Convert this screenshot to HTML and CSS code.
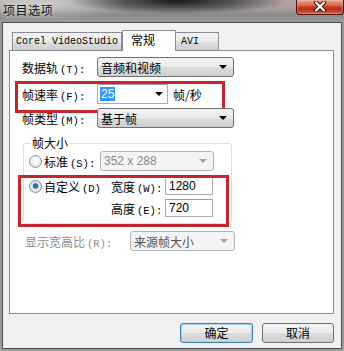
FILE: index.html
```html
<!DOCTYPE html>
<html>
<head>
<meta charset="utf-8">
<link rel="stylesheet" href="styles.css">
</head>
<body>
<div class="window">
  <div class="titlebar">
    <span class="title">项目选项</span>
    <div class="close">
      <svg width="14" height="11" viewBox="0 0 14 11"><path d="M3 1.5 L11 9.5 M11 1.5 L3 9.5" stroke="#3a0d06" stroke-width="4.2" stroke-linecap="round"/><path d="M3 1.5 L11 9.5 M11 1.5 L3 9.5" stroke="#ffffff" stroke-width="2.4" stroke-linecap="round"/></svg>
    </div>
  </div>
  <div class="frame">
    <div class="face">
      <div class="tabs">
        <div class="tab tab-first">Corel VideoStudio</div>
        <div class="tab tab-active">常规</div>
        <div class="tab tab-last">AVI</div>
      </div>
      <div class="panel">
        <div class="row r1">
          <span class="lbl">数据轨<span class="mn">(T):</span></span>
          <div class="combo combo-wide"><span>音频和视频</span><i class="arrow"></i></div>
        </div>
        <div class="row r2 marked">
          <span class="lbl">帧速率<span class="mn">(F):</span></span>
          <div class="edit-combo"><span class="sel">25</span><i class="arrow"></i></div>
          <span class="unit">帧/秒</span>
        </div>
        <div class="row r3">
          <span class="lbl">帧类型<span class="mn">(M):</span></span>
          <div class="combo combo-wide"><span>基于帧</span><i class="arrow"></i></div>
        </div>
        <div class="group">
          <span class="legend">帧大小</span>
          <div class="grow g1">
            <i class="radio"></i>
            <span class="rlbl dim-no">标准<span class="mn">(S):</span></span>
            <div class="combo combo-disabled combo-std"><span class="num">352 x 288</span><i class="arrow arrow-dim"></i></div>
          </div>
          <div class="custom marked2">
            <div class="grow g2">
              <i class="radio radio-on"></i>
              <span class="rlbl rlbl-custom">自定义<span class="mn">(D)</span></span>
              <span class="flbl">宽度<span class="mn">(W):</span></span>
              <div class="edit num">1280</div>
            </div>
            <div class="grow g3">
              <span class="flbl">高度<span class="mn">(E):</span></span>
              <div class="edit num">720</div>
            </div>
          </div>
        </div>
        <div class="row r4">
          <span class="lbl lbl-dim">显示宽高比<span class="mn">(R):</span></span>
          <div class="combo combo-disabled combo-aspect"><span>来源帧大小</span><i class="arrow arrow-dim"></i></div>
        </div>
      </div>
      <div class="buttons">
        <div class="btn btn-default">确定</div>
        <div class="btn">取消</div>
      </div>
    </div>
  </div>
</div>
</body>
</html>
```

FILE: styles.css
```css
* { box-sizing: border-box; }
html, body { margin: 0; padding: 0; }
body {
  width: 344px;
  height: 351px;
  overflow: hidden;
  font-family: "Noto Sans CJK SC", "Noto Sans", sans-serif;
  font-size: 12px;
  color: #000;
}
.window {
  width: 344px;
  height: 351px;
  display: flex;
  flex-direction: column;
  background: #9c9c9c;
}
.titlebar {
  height: 22px;
  display: flex;
  align-items: flex-start;
  background:
    radial-gradient(ellipse 110px 13px at 178px 1px, rgba(18,18,18,0.95), rgba(30,30,30,0.55) 55%, rgba(40,40,40,0)),
    radial-gradient(ellipse 90px 16px at 40px 4px, rgba(215,215,215,0.8), rgba(215,215,215,0)),
    radial-gradient(ellipse 60px 14px at 280px 2px, rgba(190,160,160,0.6), rgba(190,160,160,0)),
    linear-gradient(to bottom, #a8a8a8 0%, #989898 45%, #8a8a8a 65%, #9a9a9a 100%);
}
.title {
  margin: 2px 0 0 3px;
  line-height: 16px;
  font-size: 12px;
  letter-spacing: 0.6px;
  color: #101010;
  text-shadow: 0 0 4px rgba(255,255,255,0.8);
}
.close {
  margin-left: auto;
  width: 48px;
  height: 15px;
  border: 1px solid #4a1208;
  border-top: none;
  border-radius: 0 0 4px 4px;
  background: linear-gradient(to bottom, #e7a08e 0%, #d9705a 35%, #c4371c 52%, #b8301a 70%, #d0654a 100%);
  display: flex;
  align-items: center;
  justify-content: center;
  box-shadow: inset 0 0 0 1px rgba(255,200,180,0.35);
}
.close svg { display: block; margin-top: -1px; }
.frame {
  flex: 1;
  display: flex;
  padding: 0 2px 2px 2px;
}
.face {
  flex: 1;
  border: 1px solid #4e4e4e;
  background: #f0f0f0;
  padding: 7px 7px 0 6px;
  display: flex;
  flex-direction: column;
}
.tabs {
  height: 20px;
  display: flex;
  align-items: flex-end;
  margin-left: 3px;
  position: relative;
  z-index: 1;
}
.tab {
  height: 18px;
  border: 1px solid #898c95;
  border-bottom: none;
  background: linear-gradient(to bottom, #f2f2f2 0%, #ebebeb 50%, #dddddd 51%, #cfcfcf 100%);
  padding: 0 3px;
  line-height: 17px;
  white-space: nowrap;
  overflow: hidden;
  flex: none;
}
.tab-first {
  width: 110px;
  font-family: "Liberation Mono", monospace;
  font-size: 10px;
  letter-spacing: 0;
  padding: 0 0 0 3px;
}
.tab-active {
  width: 54px;
  height: 21px;
  margin-bottom: -1px;
  background: #ffffff;
  padding-left: 8px;
  line-height: 18px;
}
.tab-last {
  width: 43px;
  border-left: none;
  font-family: "Liberation Mono", monospace;
  font-size: 10px;
  padding-left: 5px;
}
.panel {
  width: 325px;
  height: 264px;
  border: 1px solid #898c95;
  background: #ffffff;
  padding: 6px 0 0 12px;
  display: flex;
  flex-direction: column;
}
.row {
  height: 20px;
  display: flex;
  align-items: center;
  position: relative;
}
.r1 { margin-bottom: 7px; }
.r2 { margin-bottom: 4px; }
.lbl {
  width: 75px;
  flex: none;
  white-space: nowrap;
}
.lbl-dim { color: #8e8e8e; width: 105px; margin-left: 3px; }
.mn {
  font-family: "Liberation Mono", monospace;
  font-size: 10.5px;
  margin-left: 2px;
}
.combo {
  height: 20px;
  border: 1px solid #707070;
  border-radius: 3px;
  background: linear-gradient(to bottom, #f2f2f2 0%, #ebebeb 50%, #dddddd 51%, #cfcfcf 100%);
  display: flex;
  align-items: center;
  padding-left: 3px;
  position: relative;
}
.combo-wide { width: 137px; }
.arrow {
  margin-left: auto;
  margin-right: 6px;
  width: 0;
  height: 0;
  border-left: 4px solid transparent;
  border-right: 4px solid transparent;
  border-top: 4px solid #000;
}
.arrow-dim { border-top-color: #a0a0a0; }
.edit-combo {
  width: 71px;
  height: 20px;
  border: 1px solid #abadb3;
  border-top-color: #9aa0a8;
  background: #fff;
  display: flex;
  align-items: center;
  padding-left: 2px;
}
.edit-combo .arrow { margin-right: 4px; }
.sel {
  background: #3399ff;
  color: #fff;
  font-family: "Liberation Sans", Arial, sans-serif;
  line-height: 14px;
  padding: 0 1px;
}
.unit { margin-left: 5px; }
.marked::after {
  content: "";
  position: absolute;
  left: -7px;
  top: -3px;
  width: 204px;
  height: 26px;
  border: 3px solid #c4262c;
  pointer-events: none;
}
.group {
  margin: 15px 0 0 1px;
  width: 209px;
  height: 81px;
  border: 1px solid #d5dfe5;
  border-radius: 3px;
  padding: 0 0 0 5px;
  display: flex;
  flex-direction: column;
}
.legend {
  align-self: flex-start;
  margin: -8px 0 0 1px;
  height: 14px;
  line-height: 14px;
  padding: 0 2px;
  background: #fff;
}
.grow {
  display: flex;
  align-items: center;
}
.g1 { height: 20px; margin-top: 1px; }
.g2 { height: 18px; }
.g3 { height: 18px; margin-top: 4px; padding-left: 82px; }
.custom {
  margin-top: 6px;
  position: relative;
}
.marked2::after {
  content: "";
  position: absolute;
  left: -11px;
  top: -2px;
  width: 205px;
  height: 46px;
  border: 3px solid #c4262c;
  pointer-events: none;
}
.radio {
  width: 13px;
  height: 13px;
  border-radius: 50%;
  border: 1px solid #8e8f8f;
  background: radial-gradient(circle at 50% 40%, #ffffff 0%, #f0f0f0 50%, #d8d8d8 100%);
  flex: none;
  margin-left: 0;
  position: relative;
}
.radio-on {
  background: radial-gradient(circle at 50% 45%, #3e7fc7 0%, #2a5e9c 28%, #d8e3ee 36%, #f4f4f4 100%);
  border-color: #6f8aa8;
}
.rlbl {
  margin-left: 2px;
  width: 56px;
  white-space: nowrap;
}
.combo-std { width: 114px; margin-left: 0; }
.combo-disabled {
  border-color: #adb2b5;
  background: #f4f4f4;
  color: #8a8a8a;
}
.num {
  font-family: "Liberation Sans", Arial, sans-serif;
  font-size: 12px;
}
.rlbl-custom { width: 67px; }
.flbl {
  width: 54px;
  white-space: nowrap;
}
.edit {
  width: 48px;
  height: 18px;
  border: 1px solid #abadb3;
  border-top-color: #9aa0a8;
  background: #fff;
  padding-left: 3px;
  line-height: 16px;
}
.r4 { margin-top: 7px; }
.combo-aspect { width: 105px; color: #5a5a5a; }
.combo-aspect span { color: #555; }
.buttons {
  margin-top: 9px;
  display: flex;
  justify-content: flex-end;
  gap: 9px;
}
.btn {
  width: 72px;
  height: 20px;
  border: 1px solid #707070;
  border-radius: 3px;
  background: linear-gradient(to bottom, #f2f2f2 0%, #ebebeb 50%, #dddddd 51%, #cfcfcf 100%);
  text-align: center;
  line-height: 18px;
}
.btn-default {
  width: 73px;
  border-color: #3c7fb1;
  box-shadow: inset 0 0 0 1px #9fd6f4;
}
```
